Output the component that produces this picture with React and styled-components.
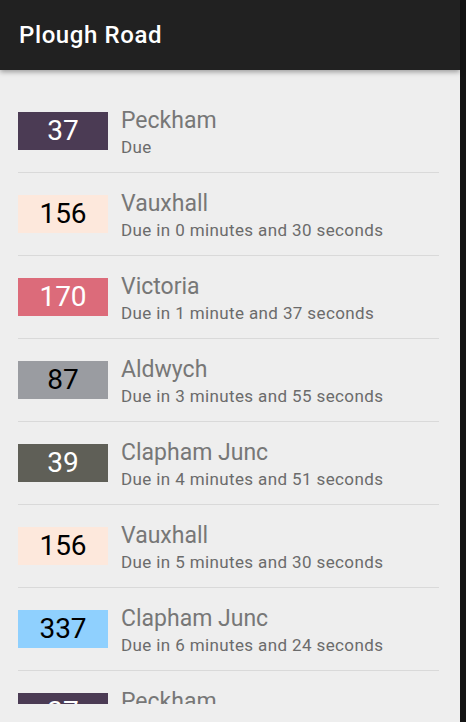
import React from "react";
import styled, { createGlobalStyle } from "styled-components";

const Global = createGlobalStyle`
  html, body { margin: 0; padding: 0; background: #141414; }
  body { font-family: Roboto, "Noto Sans", Arial, sans-serif; }
  * { box-sizing: border-box; }
`;

const Screen = styled.div`
  display: flex;
  width: 466px;
  height: 722px;
  overflow: hidden;
  background: #141414;
`;

const Main = styled.div`
  width: 460px;
  height: 722px;
  display: flex;
  flex-direction: column;
  background: #eeeeee;
`;

const Toolbar = styled.header`
  height: 70px;
  flex: none;
  display: flex;
  align-items: center;
  padding-left: 19px;
  background: #212121;
  color: #ffffff;
  font-size: 24px;
  font-weight: 500;
  letter-spacing: 0.6px;
  box-shadow: 0 2px 5px rgba(0, 0, 0, 0.35);
  position: relative;
  z-index: 1;
`;

const List = styled.ul`
  list-style: none;
  margin: 0;
  padding: 20px 21px 0 18px;
  height: 634px;
  flex: none;
  overflow: hidden;
`;

const Row = styled.li`
  height: 83px;
  display: flex;
  align-items: center;
  border-bottom: 1px solid #d9d9d9;
`;

const Badge = styled.div`
  width: 90px;
  height: 38px;
  flex: none;
  display: flex;
  align-items: center;
  justify-content: center;
  background: ${(p) => p.$bg};
  color: ${(p) => p.$fg};
  font-size: 28px;
  line-height: 1;
`;

const Info = styled.div`
  margin-left: 13px;
  display: flex;
  flex-direction: column;
  padding-top: 4px;
`;

const Destination = styled.div`
  color: #777777;
  font-size: 23px;
  line-height: 26px;
`;

const Due = styled.div`
  color: #6b6b6b;
  font-size: 17px;
  letter-spacing: 0.38px;
  line-height: 22px;
  margin-top: 2px;
`;

const Edge = styled.div`
  width: 6px;
  flex: none;
  background: #141414;
`;

const arrivals = [
  { route: "37", bg: "#4b3b54", fg: "#ffffff", dest: "Peckham", due: "Due" },
  { route: "156", bg: "#fde8dc", fg: "#000000", dest: "Vauxhall", due: "Due in 0 minutes and 30 seconds" },
  { route: "170", bg: "#dc6b7a", fg: "#ffffff", dest: "Victoria", due: "Due in 1 minute and 37 seconds" },
  { route: "87", bg: "#9a9ca1", fg: "#000000", dest: "Aldwych", due: "Due in 3 minutes and 55 seconds" },
  { route: "39", bg: "#5f5f57", fg: "#ffffff", dest: "Clapham Junc", due: "Due in 4 minutes and 51 seconds" },
  { route: "156", bg: "#fde8dc", fg: "#000000", dest: "Vauxhall", due: "Due in 5 minutes and 30 seconds" },
  { route: "337", bg: "#8fd0fe", fg: "#000000", dest: "Clapham Junc", due: "Due in 6 minutes and 24 seconds" },
  { route: "37", bg: "#4b3b54", fg: "#ffffff", dest: "Peckham", due: "Due in 7 minutes and 2 seconds" },
];

export default function App() {
  return (
    <>
      <Global />
      <Screen>
        <Main>
          <Toolbar>Plough Road</Toolbar>
          <List>
            {arrivals.map((a, i) => (
              <Row key={i}>
                <Badge $bg={a.bg} $fg={a.fg}>{a.route}</Badge>
                <Info>
                  <Destination>{a.dest}</Destination>
                  <Due>{a.due}</Due>
                </Info>
              </Row>
            ))}
          </List>
        </Main>
        <Edge />
      </Screen>
    </>
  );
}
